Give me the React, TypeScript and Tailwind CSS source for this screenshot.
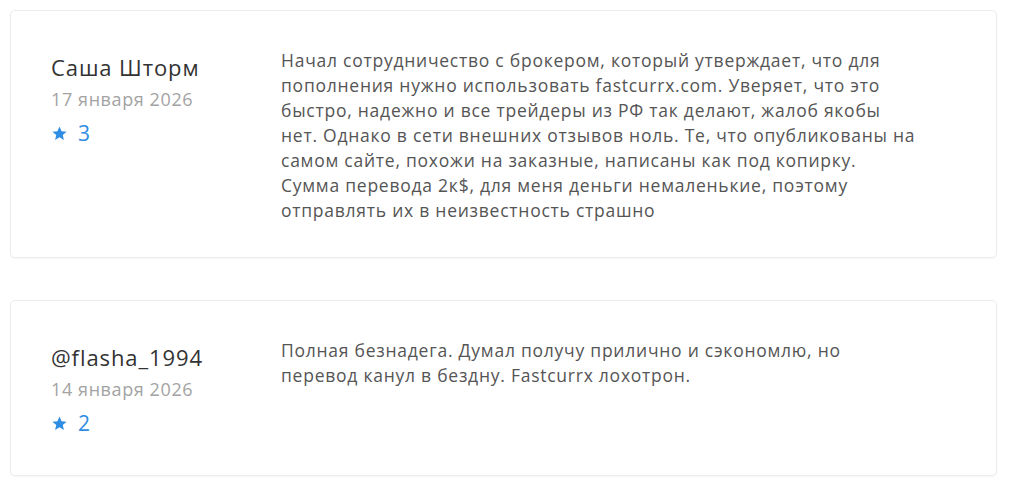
import React from "react"

interface Review {
    id: number
    author: string
    date: string
    rating: number
    lines: string[]
}

// lines kept as in the original layout
const reviews: Review[] = [
    {
        id: 1,
        author: "Саша Шторм",
        date: "17 января 2026",
        rating: 3,
        lines: [
            "Начал сотрудничество с брокером, который утверждает, что для",
            "пополнения нужно использовать fastcurrx.com. Уверяет, что это",
            "быстро, надежно и все трейдеры из РФ так делают, жалоб якобы",
            "нет. Однако в сети внешних отзывов ноль. Те, что опубликованы на",
            "самом сайте, похожи на заказные, написаны как под копирку.",
            "Сумма перевода 2к$, для меня деньги немаленькие, поэтому",
            "отправлять их в неизвестность страшно",
        ],
    },
    {
        id: 2,
        author: "@flasha_1994",
        date: "14 января 2026",
        rating: 2,
        lines: [
            "Полная безнадега. Думал получу прилично и сэкономлю, но",
            "перевод канул в бездну. Fastcurrx лохотрон.",
        ],
    },
]

const Star = () => (
    <svg viewBox="0 0 24 24" className="w-[17px] h-[17px] fill-[#2f8de4]">
        <path d="M12 2.2l2.9 6.6 7.1.6-5.4 4.7 1.6 7-6.2-3.7-6.2 3.7 1.6-7L2 9.4l7.1-.6z" />
    </svg>
)

export default function App() {
    return (
        <div className="min-h-screen bg-white px-[10px] pt-[10px] font-['Open_Sans',sans-serif]">
            <div className="w-[987px] flex flex-col gap-[42px]">
                {reviews.map((r) => (
                    <div
                        key={r.id}
                        className="flex bg-white border border-[#ececec] rounded-[5px] shadow-[0_1px_2px_rgba(0,0,0,0.04)] px-[40px] pt-[36px] pb-[34px]"
                    >
                        <div className="w-[230px] shrink-0 pb-[4px]">
                            <div className="mt-[5px] text-[22px] leading-[30px] tracking-[0.9px] text-[#333]">{r.author}</div>
                            <div className="mt-[4px] text-[18px] leading-[26px] tracking-[0.6px] text-[#a3a3a3]">{r.date}</div>
                            <div className="flex items-center gap-[10px] mt-[7px] text-[21px] leading-[28px] text-[#2f8de4]">
                                <Star />
                                <span>{r.rating}</span>
                            </div>
                        </div>
                        <p className="flex-1 whitespace-pre-line text-[17.5px] leading-[25px] tracking-[0.75px] text-[#555] pt-[1px]">
                            {r.lines.join("\n")}
                        </p>
                    </div>
                ))}
            </div>
        </div>
    )
}
